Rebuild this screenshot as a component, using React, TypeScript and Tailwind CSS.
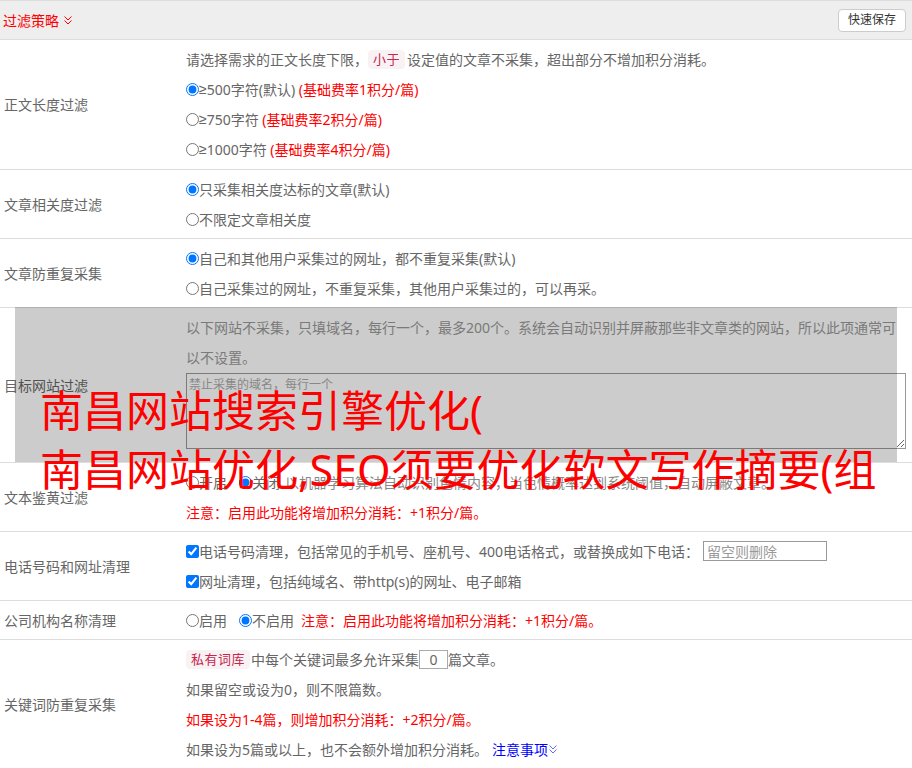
import React from "react";

function Chevrons({ color, className }: { color: string; className?: string }) {
  return (
    <svg width="8" height="9" viewBox="0 0 8 9" className={className} fill="none" stroke={color} strokeWidth="1">
      <path d="M0.5 0.5 L4 4 L7.5 0.5" />
      <path d="M0.5 4.5 L4 8 L7.5 4.5" />
    </svg>
  );
}

function Radio({ checked, name }: { checked?: boolean; name: string }) {
  return <input type="radio" name={name} defaultChecked={checked} className="m-0 h-[13px] w-[13px] shrink-0" />;
}

function Check() {
  return <input type="checkbox" defaultChecked className="m-0 h-[13px] w-[13px] shrink-0" />;
}

function Row({ label, children, className }: { label: string; children: React.ReactNode; className?: string }) {
  return (
    <div className="flex border-b border-[#ddd]">
      <div className="flex w-[186px] shrink-0 items-center pl-[4px]">{label}</div>
      <div className={"min-w-0 flex-1 py-[4px] pr-[6px] " + (className ?? "")}>{children}</div>
    </div>
  );
}

function Line({ children, className }: { children: React.ReactNode; className?: string }) {
  return <div className={"flex h-[30px] items-center whitespace-nowrap " + (className ?? "")}>{children}</div>;
}

function Tag({ children }: { children: React.ReactNode }) {
  return (
    <span className="rounded-[4px] bg-[#f9f2f4] px-[5px] py-[1px] text-[13px] leading-[17px] tracking-[0.5px] text-[#c7254e]">
      {children}
    </span>
  );
}

function Ge() {
  return <span className="font-['Liberation_Sans',sans-serif]">≥</span>;
}

export default function App() {
  return (
    <div className="relative w-[912px] overflow-hidden bg-white font-['Noto_Sans','Noto_Sans_CJK_SC',sans-serif] text-[14px] text-[#666]">
      <div className="flex h-[40px] items-center justify-between border-y border-[#ddd] bg-[#eee] pl-[3px] pr-[6px]">
        <div className="flex items-center text-[#f00]">
          过滤策略
          <Chevrons color="#f00" className="ml-[5px]" />
        </div>
        <button className="h-[23px] w-[68px] rounded-[4px] border border-[#ccc] bg-white text-[12px] text-[#333]">快速保存</button>
      </div>

      <Row label="正文长度过滤" className="pb-[5px]">
        <Line>
          请选择需求的正文长度下限，<Tag>小于</Tag>
          <span className="ml-[2px]">设定值的文章不采集，超出部分不增加积分消耗。</span>
        </Line>
        <Line>
          <Radio name="len" checked />
          <Ge />
          500字符(默认)&nbsp;<span className="text-[#f00]">(基础费率1积分/篇)</span>
        </Line>
        <Line>
          <Radio name="len" />
          <Ge />
          750字符&nbsp;<span className="text-[#f00]">(基础费率2积分/篇)</span>
        </Line>
        <Line>
          <Radio name="len" />
          <Ge />
          1000字符&nbsp;<span className="text-[#f00]">(基础费率4积分/篇)</span>
        </Line>
      </Row>

      <Row label="文章相关度过滤">
        <Line>
          <Radio name="rel" checked />
          只采集相关度达标的文章(默认)
        </Line>
        <Line>
          <Radio name="rel" />
          不限定文章相关度
        </Line>
      </Row>

      <Row label="文章防重复采集">
        <Line>
          <Radio name="dup" checked />
          自己和其他用户采集过的网址，都不重复采集(默认)
        </Line>
        <Line>
          <Radio name="dup" />
          自己采集过的网址，不重复采集，其他用户采集过的，可以再采。
        </Line>
      </Row>

      <Row label="目标网站过滤">
        <Line className="text-[#999]">以下网站不采集，只填域名，每行一个，最多200个。系统会自动识别并屏蔽那些非文章类的网站，所以此项通常可</Line>
        <Line className="text-[#999]">以不设置。</Line>
        <textarea
          placeholder="禁止采集的域名，每行一个"
          className="mb-[9px] mt-[1px] block h-[76px] w-[720px] border border-[#999] bg-white p-[2px] text-[12px] leading-normal placeholder:text-[#aaa]"
        />
      </Row>

      <Row label="文本鉴黄过滤">
        <Line>
          <Radio name="porn" />
          开启
          <span className="ml-[12px] flex items-center">
            <Radio name="porn" checked />
            关闭
          </span>
          <span className="ml-[5px] text-[#888]">以机器学习算法自动识别色情内容，当色情概率达到系统阈值，自动屏蔽文章。</span>
        </Line>
        <Line className="text-[#f00]">注意：启用此功能将增加积分消耗：+1积分/篇。</Line>
      </Row>

      <Row label="电话号码和网址清理">
        <Line>
          <Check />
          电话号码清理，包括常见的手机号、座机号、400电话格式，或替换成如下电话：
          <input
            placeholder="留空则删除"
            className="ml-[4px] h-[20px] w-[124px] border border-[#999] pl-[3px] text-[14px] placeholder:text-[#999]"
          />
        </Line>
        <Line>
          <Check />
          网址清理，包括纯域名、带http(s)的网址、电子邮箱
        </Line>
      </Row>

      <Row label="公司机构名称清理">
        <Line>
          <Radio name="org" />
          启用
          <span className="ml-[12px] flex items-center">
            <Radio name="org" checked />
            不启用
          </span>
          <span className="ml-[7px] text-[#f00]">注意：启用此功能将增加积分消耗：+1积分/篇。</span>
        </Line>
      </Row>

      <Row label="关键词防重复采集">
        <Line>
          <Tag>私有词库</Tag>
          <span className="ml-[1px]">中每个关键词最多允许采集</span>
          <input
            defaultValue="0"
            className="h-[19px] w-[29px] border border-[#aaa] text-center text-[14px] leading-[17px] text-[#666]"
          />
          篇文章。
        </Line>
        <Line>如果留空或设为0，则不限篇数。</Line>
        <Line className="text-[#f00]">如果设为1-4篇，则增加积分消耗：+2积分/篇。</Line>
        <Line>
          如果设为5篇或以上，也不会额外增加积分消耗。
          <span className="ml-[4px] flex items-center text-[#00f]">
            注意事项
            <Chevrons color="#66f" className="ml-[1px]" />
          </span>
        </Line>
      </Row>

      <div className="pointer-events-none absolute left-[15px] top-[307px] h-[155px] w-[882px] bg-black/20" />
      <div className="pointer-events-none absolute left-[40px] top-[381px] whitespace-nowrap text-[43px] leading-[59px] text-[#f00]">
        南昌网站搜索引擎优化(
        <br />
        南昌网站优化,SEO须要优化软文写作摘要(组
      </div>
    </div>
  );
}
